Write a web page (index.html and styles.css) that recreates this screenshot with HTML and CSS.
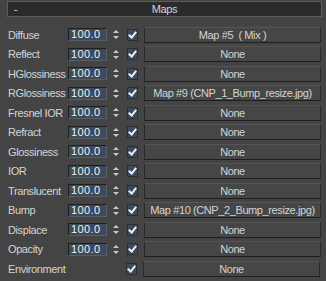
FILE: index.html
```html
<!DOCTYPE html>
<html>
<head>
<meta charset="utf-8">
<link rel="stylesheet" href="styles.css">
</head>
<body>
<div class="panel">
  <div class="header"><span class="minus">-</span><span class="title">Maps</span></div>
  <div class="rows">
    <div class="row"><span class="label">Diffuse</span><span class="num">100.0</span><span class="spin"></span><span class="check"></span><span class="btn">Map #5&nbsp;&nbsp;( Mix )</span></div>
    <div class="row"><span class="label">Reflect</span><span class="num">100.0</span><span class="spin"></span><span class="check"></span><span class="btn">None</span></div>
    <div class="row"><span class="label">HGlossiness</span><span class="num">100.0</span><span class="spin"></span><span class="check"></span><span class="btn">None</span></div>
    <div class="row"><span class="label">RGlossiness</span><span class="num">100.0</span><span class="spin"></span><span class="check"></span><span class="btn">Map #9 (CNP_1_Bump_resize.jpg)</span></div>
    <div class="row"><span class="label">Fresnel IOR</span><span class="num">100.0</span><span class="spin"></span><span class="check"></span><span class="btn">None</span></div>
    <div class="row"><span class="label">Refract</span><span class="num">100.0</span><span class="spin"></span><span class="check"></span><span class="btn">None</span></div>
    <div class="row"><span class="label">Glossiness</span><span class="num">100.0</span><span class="spin"></span><span class="check"></span><span class="btn">None</span></div>
    <div class="row"><span class="label">IOR</span><span class="num">100.0</span><span class="spin"></span><span class="check"></span><span class="btn">None</span></div>
    <div class="row"><span class="label">Translucent</span><span class="num">100.0</span><span class="spin"></span><span class="check"></span><span class="btn">None</span></div>
    <div class="row"><span class="label">Bump</span><span class="num">100.0</span><span class="spin"></span><span class="check"></span><span class="btn">Map #10 (CNP_2_Bump_resize.jpg)</span></div>
    <div class="row"><span class="label">Displace</span><span class="num">100.0</span><span class="spin"></span><span class="check"></span><span class="btn">None</span></div>
    <div class="row"><span class="label">Opacity</span><span class="num">100.0</span><span class="spin"></span><span class="check"></span><span class="btn">None</span></div>
    <div class="row"><span class="label wide">Environment</span><span class="check"></span><span class="btn">None</span></div>
  </div>
</div>
</body>
</html>
```
FILE: styles.css
```css
html, body {
  margin: 0;
  padding: 0;
  background: #444444;
  width: 326px;
  height: 281px;
  overflow: hidden;
}
body {
  font-family: "Liberation Sans", Arial, sans-serif;
  font-size: 11px;
  letter-spacing: -0.4px;
  color: #d4d4d4;
}
.panel {
  padding-top: 1px;
}
.header {
  margin: 0 4px 0 7px;
  height: 14px;
  border: 1px solid #5e5e5e;
  background: #2b2b2b;
  display: flex;
  align-items: center;
  position: relative;
  line-height: 14px;
}
.minus {
  padding-left: 6px;
  width: 20px;
}
.title {
  position: absolute;
  left: 0;
  right: 0;
  text-align: center;
}
.rows {
  margin-top: 8px;
  display: grid;
  grid-auto-rows: 19.5px;
}
.row {
  display: flex;
  align-items: center;
}
.label {
  width: 60px;
  padding-left: 8px;
  white-space: nowrap;
}
.label.wide {
  width: 118px;
}
.num {
  width: 35px;
  height: 11px;
  background: #3b4a5c;
  border: 1px solid #1c1f22;
  border-color: #1c1f22 #5a5f66 #5a5f66 #1c1f22;
  color: #f0f0f0;
  line-height: 11px;
  padding-left: 2px;
  margin-right: 5px;
  box-sizing: content-box;
  letter-spacing: 0.4px;
  overflow: hidden;
  white-space: nowrap;
}
.spin {
  width: 7px;
  height: 11px;
  margin-right: 8px;
  position: relative;
}
.spin::before, .spin::after {
  content: "";
  position: absolute;
  left: 1px;
  border-left: 3px solid transparent;
  border-right: 3px solid transparent;
}
.spin::before {
  top: 1px;
  border-bottom: 3px solid #c8c8c8;
}
.spin::after {
  bottom: 1px;
  border-top: 3px solid #c8c8c8;
}
.check {
  width: 9px;
  height: 10px;
  background: #3b4a5c;
  border: 1px solid #2a2e33;
  margin-right: 6px;
  position: relative;
}
.check::after {
  content: "";
  position: absolute;
  left: 2px;
  top: 0px;
  width: 3px;
  height: 6px;
  border-right: 2px solid #f0f0f0;
  border-bottom: 2px solid #f0f0f0;
  transform: rotate(40deg);
}
.btn {
  width: 175px;
  height: 14px;
  line-height: 14px;
  background: #464646;
  border: 1px solid #2a2a2a;
  border-top-color: #555555;
  border-bottom-color: #1e1e1e;
  text-align: center;
  white-space: nowrap;
  overflow: hidden;
}
```
